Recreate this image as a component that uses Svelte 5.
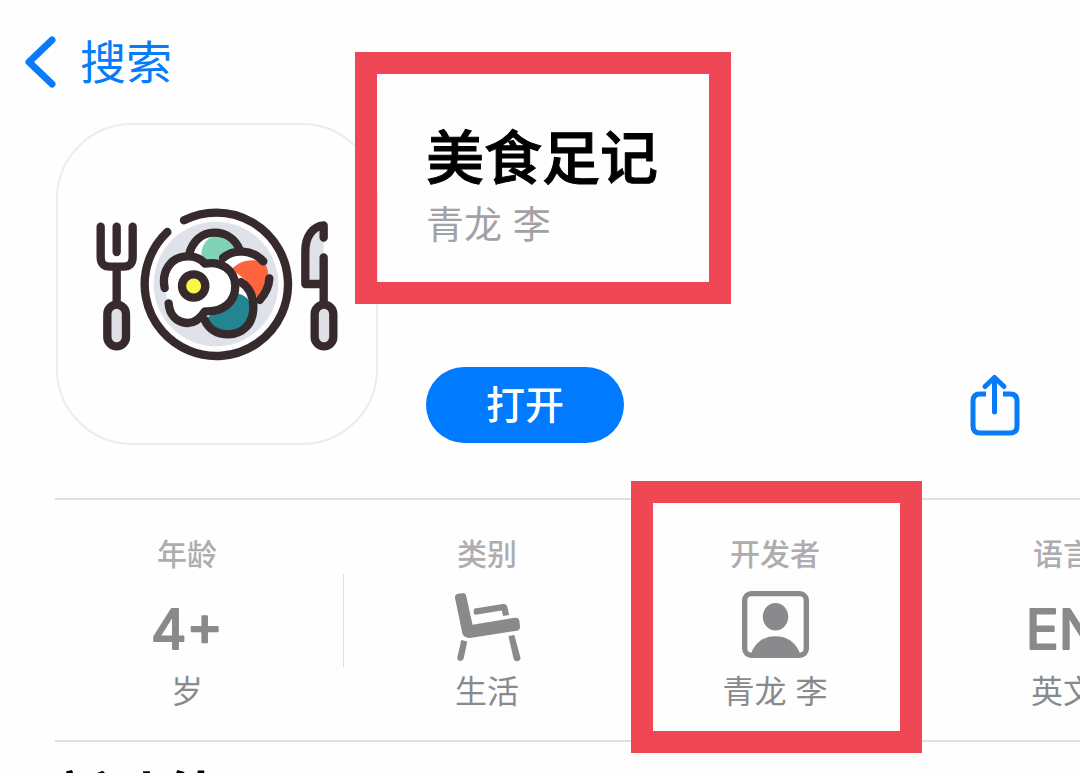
<script>
  const metrics = [
    { label: '年龄', value: '4+', note: '岁' },
    { label: '类别', icon: 'chair', note: '生活' },
    { label: '开发者', icon: 'person', note: '青龙 李', marked: true },
    { label: '语言', value: 'EN', note: '英文' }
  ];
</script>

<div class="page">
  <nav>
    <a href="#search">
      <svg width="32" height="52" viewBox="0 0 32 52" aria-hidden="true">
        <path d="M28 4L5 26l23 22" fill="none" stroke="currentColor" stroke-width="7" stroke-linecap="round" stroke-linejoin="round" />
      </svg>
      <span>搜索</span>
    </a>
  </nav>

  <header>
    <div class="app-icon">
      <svg width="280" height="190" viewBox="-8 -1 840 570" aria-hidden="true">
        <circle cx="409" cy="284" r="187" fill="#dfe2e9" />
        <g stroke="#372a2d" stroke-width="25" stroke-linecap="round" stroke-linejoin="round" fill="none">
          <path d="M313 93A215 215 0 1 1 263 128" />

          <circle cx="404" cy="208" r="78" fill="#fff" stroke="none" />
          <path d="M366 212C360 174 380 146 404 140C440 138 464 160 470 186L430 212Z" fill="#80d3b7" stroke="none" />
          <path d="M328 196C338 156 366 130 404 130C440 130 468 150 480 182" />

          <circle cx="488" cy="268" r="78" fill="#fff" stroke="none" />
          <path d="M456 240C480 212 525 205 555 222C568 240 570 270 558 296L534 326L498 272Z" fill="#ff653d" stroke="none" />
          <path d="M430 206C462 178 518 180 551 216M569 267C568 292 558 312 540 332" />

          <circle cx="445" cy="358" r="77" fill="#fff" stroke="none" />
          <path d="M380 388L462 314C486 310 505 324 514 344C522 394 494 430 446 432C414 432 390 416 380 388Z" fill="#23858f" stroke="none" />
          <path d="M484 278C512 296 522 322 521 356C520 406 486 435 447 435C414 435 388 420 375 392" />

          <path d="M255 296C248 248 272 200 326 201C348 201 366 211 376 223C424 214 466 242 467 290C467 340 428 369 376 366C362 388 345 402 322 401C290 398 269 376 267 342Z" fill="#fff" stroke="none" />
          <path d="M255 296C245 248 272 200 326 201C348 201 366 211 376 223C424 214 466 242 467 290C467 340 428 369 376 366C362 388 345 402 322 401C290 398 269 376 267 342" />
          <circle cx="342" cy="290" r="35" fill="#fbf64a" />

          <path d="M63 112V204Q63 232 91 232H131Q159 232 159 204V112M111 112V188M111 232V346" />
          <rect x="83" y="346" width="56" height="125" rx="28" fill="#dfe0e6" />
          <path d="M732 108C706 118 689 150 689 184V284H732Z" fill="#dfe2e9" stroke="none" />
          <path d="M732 145V108C700 110 677 142 677 184V284H722M732 204V346" />
          <rect x="705" y="346" width="56" height="125" rx="28" fill="#dfe0e6" />
        </g>
      </svg>
    </div>
    <div class="info">
      <div class="title">
        <h1>美食足记</h1>
        <p>青龙 李</p>
      </div>
      <div class="actions">
        <button class="open">打开</button>
        <button class="share" aria-label="分享">
          <svg width="50" height="62" viewBox="0 0 50 62" aria-hidden="true">
            <g fill="none" stroke="currentColor" stroke-width="5">
              <path d="M16 20H10Q3 20 3 27V52Q3 59 10 59H40Q47 59 47 52V27Q47 20 40 20H33" />
              <path d="M24.500 38V4M15 12.500L24.500 3.500L34 12.500" stroke-linecap="round" stroke-linejoin="round" />
            </g>
          </svg>
        </button>
      </div>
    </div>
  </header>

  <ul>
    {#each metrics as m}
      <li class:marked={m.marked}>
        <span class="label">{m.label}</span>
        <span class="value">
          {#if m.icon === 'chair'}
            <svg width="67" height="76" viewBox="72 200 202 228" aria-hidden="true">
              <g fill="#8a8a8d">
                <path d="M75 235Q74 225 84 223L98 221Q107 220 109 230L128 316L256 295Q267 294 269 304L271 320Q272 331 262 334L120 356Q102 357 97 342Z" />
                <path d="M135 267L219 254Q231 253 233 263L238 287L220 290L216 273L137 286Q131 286 131 276Q131 268 135 267Z" />
                <path d="M94 362L112 367L101 419Q98 427 88 425Q81 423 82 415Z" />
                <path d="M236 350L254 347L272 414Q274 423 264 426Q255 427 252 420Z" />
              </g>
            </svg>
          {:else if m.icon === 'person'}
            <svg width="67" height="67" viewBox="369 362 200 200" aria-hidden="true">
              <rect x="377" y="370" width="184" height="184" rx="20" fill="none" stroke="#8a8a8d" stroke-width="16" />
              <ellipse cx="469" cy="439" rx="38" ry="41" fill="#8a8a8d" />
              <path d="M396 548C410 514 434 497 469 497S528 514 542 548V556H396Z" fill="#8a8a8d" />
            </svg>
          {:else}
            <svg width="88" height="68" viewBox="0 0 88 68">
              <text x="44" y="59" text-anchor="middle">{m.value}</text>
            </svg>
          {/if}
        </span>
        <span class="note">{m.note}</span>
      </li>
    {/each}
  </ul>

  <h2>新功能</h2>
</div>

<style>
  :global(body) {
    margin: 0;
    background: #fefefe;
  }
  .page {
    height: 100vh;
    overflow: hidden;
    font-family: Inter, 'Noto Sans CJK SC', sans-serif;
    color: #000;
  }
  h1, h2, p, ul {
    margin: 0;
    padding: 0;
  }
  svg {
    display: block;
    flex: none;
  }
  nav {
    padding: 30px 24px 29px;
  }
  nav a {
    display: inline-flex;
    align-items: center;
    gap: 24px;
    color: #087bf8;
    font-size: 46px;
    line-height: 64px;
    text-decoration: none;
  }
  header {
    display: flex;
    gap: 48px;
    padding: 0 60px 0 56px;
  }
  .app-icon {
    box-sizing: border-box;
    display: flex;
    flex: none;
    align-items: center;
    justify-content: center;
    width: 322px;
    height: 322px;
    border: 2px solid #ececec;
    border-radius: 76px;
  }
  .info {
    display: flex;
    flex: 1;
    flex-direction: column;
    justify-content: space-between;
    padding: 3px 0 2px;
  }
  .title {
    position: relative;
    align-self: flex-start;
  }
  .title::before,
  .marked::before {
    position: absolute;
    box-sizing: border-box;
    border: 22px solid #f04754;
    content: '';
  }
  .title::before {
    inset: -74px -73px -56px -71px;
  }
  h1 {
    font-size: 58px;
    font-weight: 500;
    line-height: 64px;
    -webkit-text-stroke: 1px currentColor;
  }
  .title p {
    margin-top: 10px;
    color: #a2a2a5;
    font-size: 38px;
    line-height: 48px;
  }
  .actions {
    display: flex;
    align-items: center;
    justify-content: space-between;
  }
  button {
    padding: 0;
    border: 0;
    background: none;
    color: #087bf8;
    font-family: inherit;
  }
  .open {
    padding: 0 60px;
    border-radius: 38px;
    background: #007bff;
    color: #fff;
    font-size: 39px;
    font-weight: 500;
    line-height: 76px;
  }
  ul {
    display: flex;
    margin: 53px 0 0 55px;
    border-top: 2px solid #dfdfdf;
    border-bottom: 2px solid #dfdfdf;
    list-style: none;
  }
  li {
    position: relative;
    box-sizing: border-box;
    display: flex;
    flex: 0 0 288px;
    flex-direction: column;
    align-items: center;
    padding: 36px 0 28px;
  }
  li:first-child {
    padding-right: 24px;
  }
  li + li {
    background: linear-gradient(#dfdfdf, #dfdfdf) 0 74px / 1px 93px no-repeat;
  }
  .marked {
    z-index: 1;
  }
  .marked::before {
    inset: -19px -3px -13px 0;
  }
  .label {
    color: #adadaf;
    font-size: 30px;
    font-weight: 500;
    line-height: 36px;
  }
  .value {
    display: flex;
    align-items: center;
    height: 68px;
    margin: 18px 0 14px;
  }
  .value text {
    fill: #8a8a8d;
    stroke: #8a8a8d;
    stroke-width: 2px;
    stroke-linejoin: round;
    font-size: 55px;
    font-weight: 400;
  }
  .note {
    color: #8a8a8d;
    font-size: 32px;
    line-height: 40px;
  }
  h2 {
    margin: 18px 0 0 55px;
    font-size: 56px;
    font-weight: 700;
    line-height: 76px;
  }
</style>
